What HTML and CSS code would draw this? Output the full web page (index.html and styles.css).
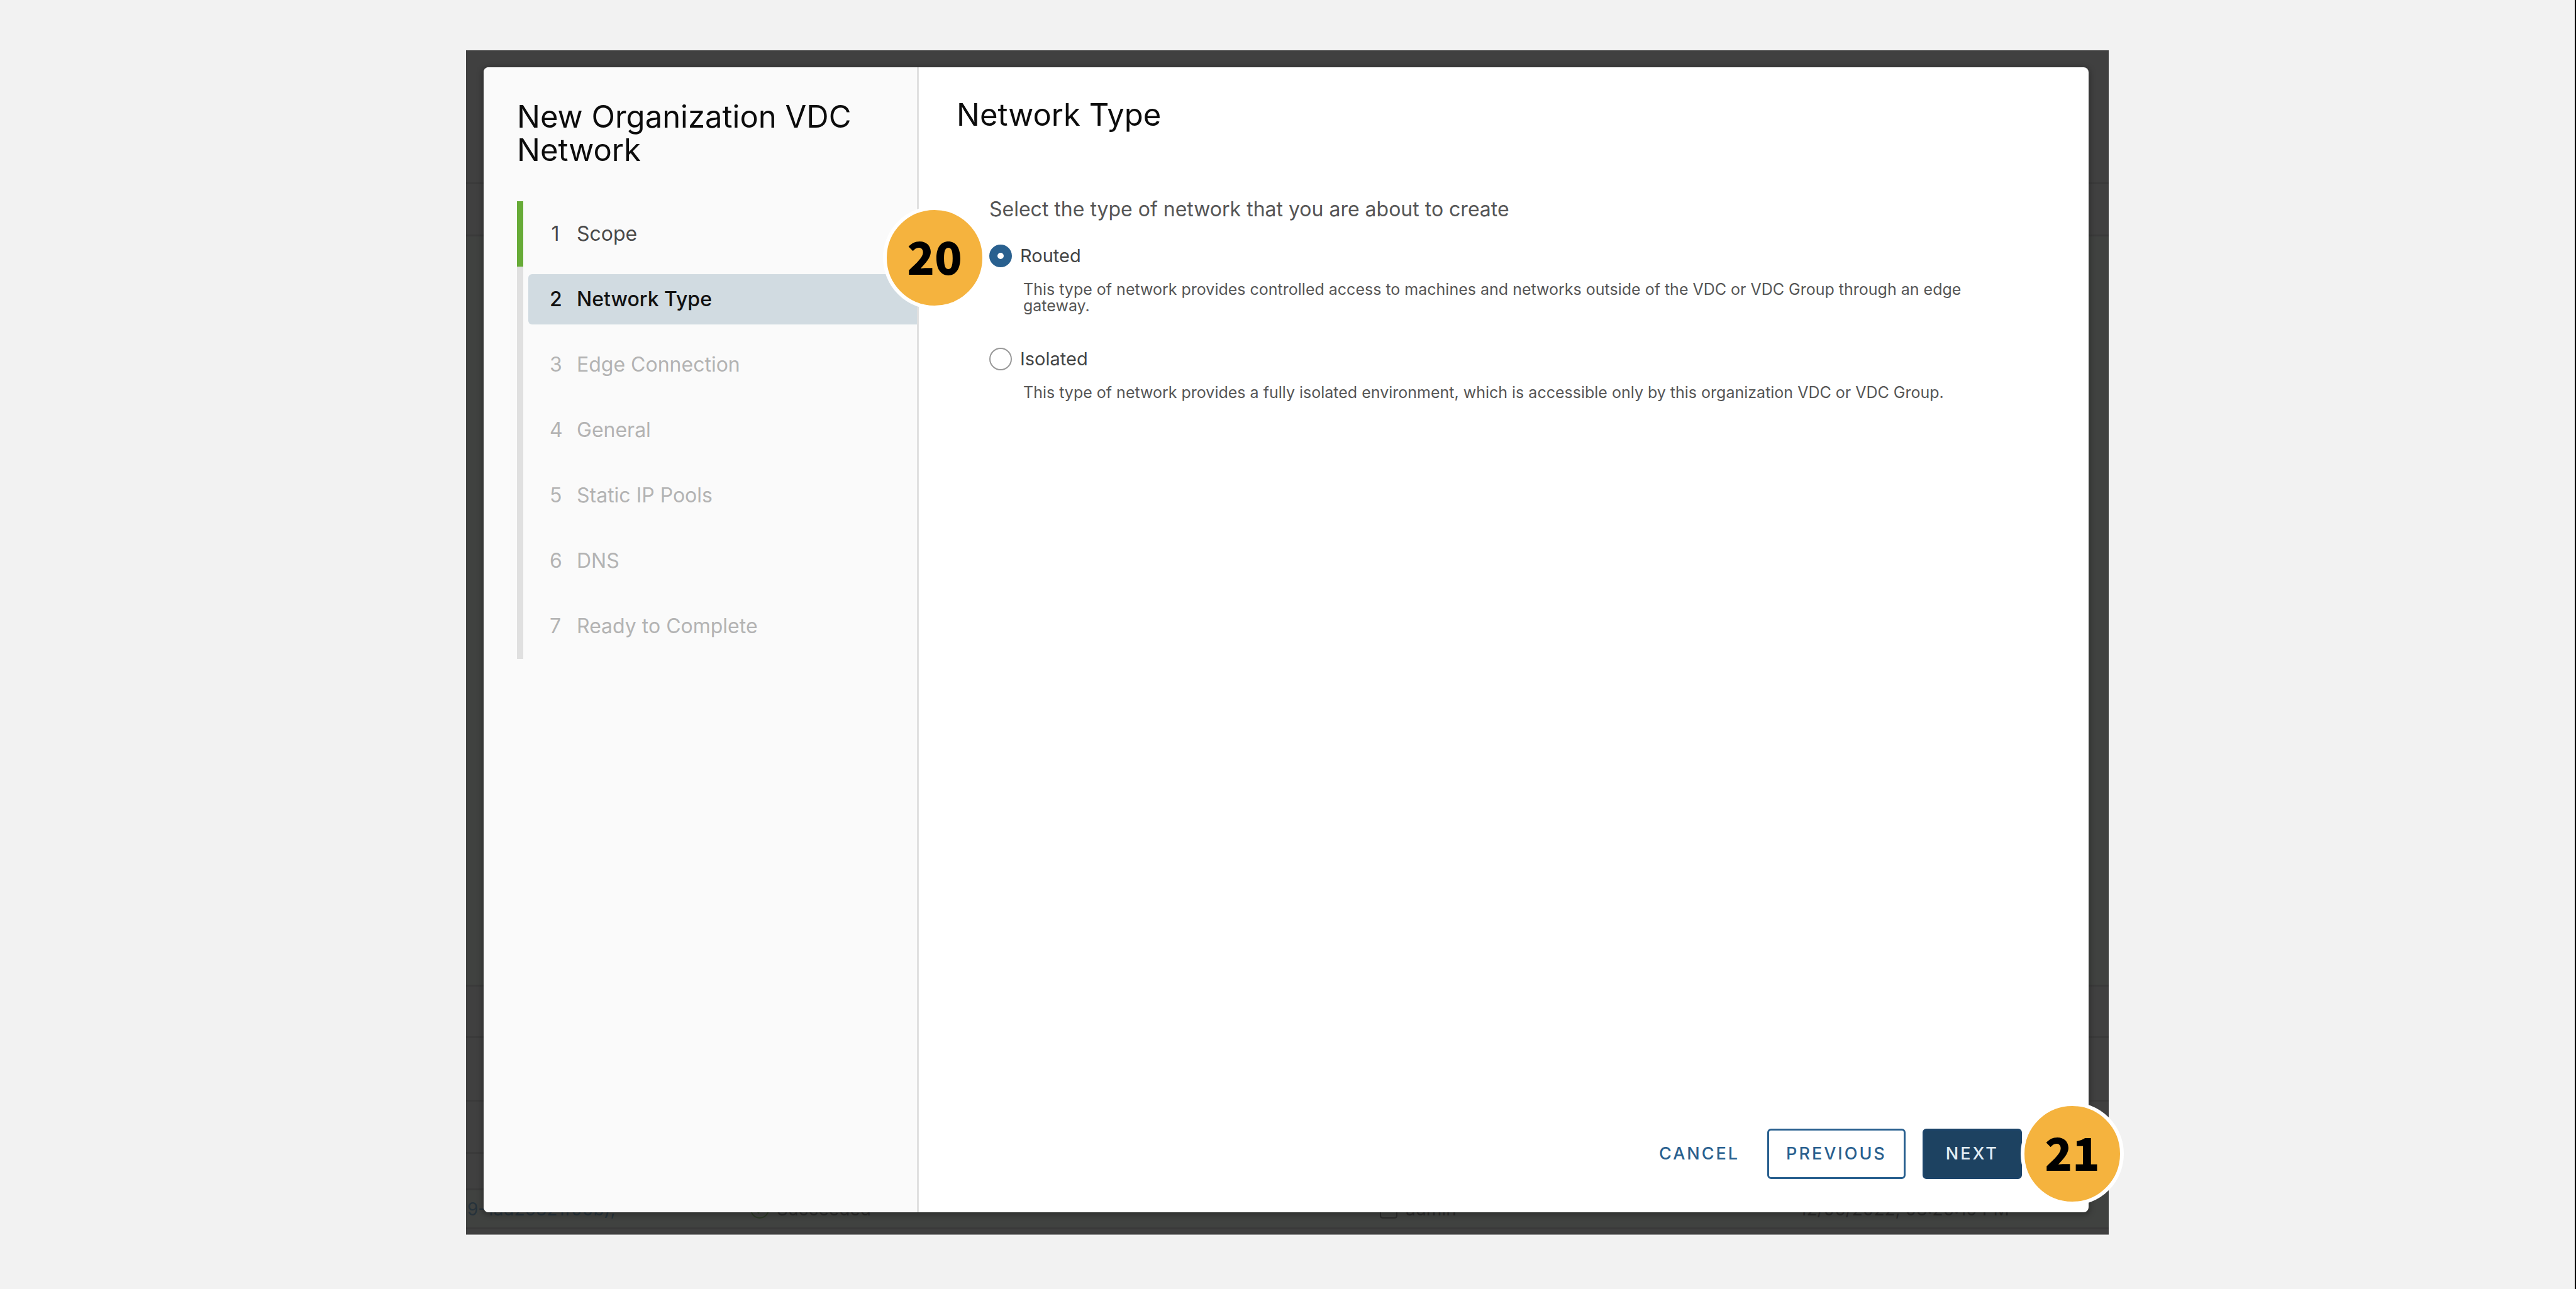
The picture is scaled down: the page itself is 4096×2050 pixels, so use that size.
FILE: index.html
```html
<!DOCTYPE html>
<html lang="en">
<head>
<meta charset="utf-8">
<title>New Organization VDC Network</title>
<link rel="stylesheet" href="styles.css">
</head>
<body>
<div class="page">
  <div class="stage">
    <div class="backdrop" aria-hidden="true">
      <div class="band band-header"></div>
      <div class="band band-toolbar"></div>
      <div class="band band-main band-tinted"></div>
      <div class="band band-row-tall"></div>
      <div class="band band-row-wide"></div>
      <div class="band band-toolbar"></div>
      <div class="band band-head"></div>
      <div class="band band-task band-tinted">
        <span class="task-name">9-1ad26821f00b),</span>
        <span class="task-status">
          <svg class="task-icon" viewBox="0 0 30 30" fill="none" stroke="#2c3a26" stroke-width="2"><circle cx="15" cy="15" r="14"/><path d="M8 15l5 6 9-11"/></svg>
          Succeeded
        </span>
        <span class="task-user">
          <svg class="task-icon" viewBox="0 0 30 30" fill="none" stroke="#2c2c2c" stroke-width="2"><circle cx="15" cy="9" r="6"/><path d="M2 18v7q0 4 4 4h18q4 0 4-4v-7"/></svg>
          admin
        </span>
        <span class="task-date">12/06/2022, 08:26:19 PM</span>
      </div>
      <div class="band band-foot"></div>
    </div>
    <main class="modal" role="dialog" aria-labelledby="wizard-title">
      <nav class="steps">
        <h1 class="title" id="wizard-title">New Organization VDC Network</h1>
        <ol class="step-list">
          <li class="step step-done"><button class="step-button" type="button"><span class="step-number">1</span>Scope</button></li>
          <li class="step step-current"><button class="step-button" type="button" aria-current="step"><span class="step-number">2</span>Network Type</button></li>
          <li class="step"><button class="step-button" type="button" disabled><span class="step-number">3</span>Edge Connection</button></li>
          <li class="step"><button class="step-button" type="button" disabled><span class="step-number">4</span>General</button></li>
          <li class="step"><button class="step-button" type="button" disabled><span class="step-number">5</span>Static IP Pools</button></li>
          <li class="step"><button class="step-button" type="button" disabled><span class="step-number">6</span>DNS</button></li>
          <li class="step"><button class="step-button" type="button" disabled><span class="step-number">7</span>Ready to Complete</button></li>
        </ol>
      </nav>
      <form class="content">
        <h2 class="title">Network Type</h2>
        <fieldset class="options">
          <legend class="prompt">Select the type of network that you are about to create</legend>
          <div class="option">
            <span class="badge badge-option">20</span>
            <input class="radio" type="radio" name="type" id="routed" aria-describedby="routed-help" checked>
            <label class="option-label" for="routed">Routed</label>
            <p class="help" id="routed-help">This type of network provides controlled access to machines and networks outside of the VDC or VDC Group through an edge gateway.</p>
          </div>
          <div class="option">
            <input class="radio" type="radio" name="type" id="isolated" aria-describedby="isolated-help">
            <label class="option-label" for="isolated">Isolated</label>
            <p class="help" id="isolated-help">This type of network provides a fully isolated environment, which is accessible only by this organization VDC or VDC Group.</p>
          </div>
        </fieldset>
        <footer class="actions">
          <button class="button button-link" type="button">CANCEL</button>
          <button class="button button-outline" type="button">PREVIOUS</button>
          <span class="anchor">
            <button class="button button-primary" type="button">NEXT</button>
            <span class="badge badge-next">21</span>
          </span>
        </footer>
      </form>
    </main>
  </div>
</div>
</body>
</html>
```

FILE: styles.css
```css
* {
  box-sizing: border-box;
}

body {
  margin: 0;
  background: #f2f2f2;
  color: #1b1b1b;
  font-family: Inter, "Liberation Sans", sans-serif;
}

.page {
  display: flex;
  min-height: 100vh;
  padding: 80px 741px 86px;
  border-right: 2px solid #000;
}

.stage {
  flex: 1;
  display: grid;
  border-bottom: 1px solid #999;
  background: #404040;
}

.backdrop,
.modal {
  grid-area: 1 / 1;
}

/* Dimmed task list behind the dialog */
.backdrop {
  display: flex;
  flex-direction: column;
  overflow: hidden;
}

.band {
  flex: none;
  border-bottom: 3px solid #3a3a3a;
}

.band-tinted { background: #404240; }
.band-header { height: 213px; }
.band-toolbar { height: 83px; }
.band-main { flex: 1; }
.band-row-tall { height: 82px; }
.band-row-wide { height: 101px; }
.band-head { height: 58px; }
.band-foot { height: 8px; border-bottom: 0; }

.band-task {
  display: grid;
  grid-template-columns: 450px 1000px 668px 1fr;
  align-items: center;
  height: 62px;
  padding-left: 2px;
  color: #2a2a2a;
  font-size: 28px;
  line-height: 34px;
}

.task-name { color: #26323b; }

.task-status,
.task-user {
  display: flex;
  align-items: center;
  gap: 12px;
}

.task-icon {
  width: 30px;
  height: 30px;
}

/* Dialog */
.modal {
  display: flex;
  margin: 27px 32px 35px 28px;
  border-radius: 8px;
  background: #fff;
  box-shadow: 0 2px 8px 3px rgba(0, 0, 0, 0.25);
}

.steps {
  flex: none;
  width: 692px;
  padding: 52px 0 0 53px;
  border-right: 3px solid #e0e0e0;
  border-radius: 8px 0 0 8px;
  background: #fafafa;
}

.title {
  margin: 0;
  color: #0c0c0c;
  font-size: 49px;
  font-weight: 400;
  line-height: 53px;
}

.step-list {
  display: grid;
  grid-auto-rows: 104px;
  margin: 55px 0 0;
  padding: 0;
  list-style: none;
}

.step {
  display: flex;
  align-items: center;
  padding-left: 8px;
  border-left: 10px solid #e0e0e0;
}

.step-done { border-left-color: #67ab37; }

.step-button {
  display: flex;
  align-items: center;
  width: 100%;
  height: 80px;
  padding: 0 0 0 34px;
  border: 0;
  border-radius: 6px 0 0 6px;
  background: none;
  color: #4a4a4a;
  font: 400 32px/40px Inter, "Liberation Sans", sans-serif;
  text-align: left;
}

.step-button:disabled { color: #b3b3b3; }

.step-current .step-button {
  background: #d1dbe1;
  color: #111;
  font-weight: 500;
}

.step-number {
  width: 18px;
  margin-right: 25px;
  text-align: center;
}

.content {
  flex: 1;
  display: flex;
  flex-direction: column;
  padding: 49px 106px 53px 60px;
}

.options {
  margin: 104px 0 0;
  padding: 0 0 0 52px;
  border: 0;
}

.prompt {
  padding: 0;
  color: #565656;
  font-size: 32px;
  line-height: 40px;
}

.option {
  position: relative;
  display: grid;
  grid-template-columns: 36px 1fr;
  column-gap: 13px;
  align-items: center;
  margin-top: 36px;
}

.option + .option { margin-top: 54px; }

.radio {
  appearance: none;
  width: 36px;
  height: 36px;
  margin: 0;
  border: 2px solid #999;
  border-radius: 50%;
  background: #fff;
}

.radio:checked {
  border: 13px solid #29608f;
}

.option-label {
  color: #454545;
  font-size: 29px;
  line-height: 36px;
}

.help {
  grid-column: 2;
  max-width: 1500px;
  margin: 22px 0 0 5px;
  color: #565656;
  font-size: 25px;
  line-height: 26px;
}

.actions {
  display: flex;
  align-items: center;
  justify-content: flex-end;
  gap: 27px;
  margin-top: auto;
}

.button {
  height: 80px;
  padding: 0 27px;
  border: 3px solid transparent;
  border-radius: 6px;
  background: none;
  color: #29608f;
  font: 500 27px/36px Inter, "Liberation Sans", sans-serif;
  letter-spacing: 3px;
}

.button-link { padding: 0 14px; }

.button-outline { border-color: #29608f; }

.button-primary {
  padding: 0 34px;
  border-color: #1c4469;
  background: #1d4261;
  color: #e1edf5;
}

/* Numbered callouts */
.anchor {
  position: relative;
  display: flex;
}

.badge {
  position: absolute;
  z-index: 1;
  display: grid;
  place-items: center;
  width: 164px;
  height: 164px;
  padding-bottom: 8px;
  border: 6px solid #fff;
  border-radius: 50%;
  background: #f5b33e;
  color: #000;
  font-family: "Noto Sans CJK JP", sans-serif;
  font-size: 72px;
  font-weight: 900;
  line-height: 72px;
}

.badge-option {
  top: -61px;
  right: calc(100% + 5px);
}

.badge-next {
  top: -42px;
  left: calc(100% - 2px);
}
```
